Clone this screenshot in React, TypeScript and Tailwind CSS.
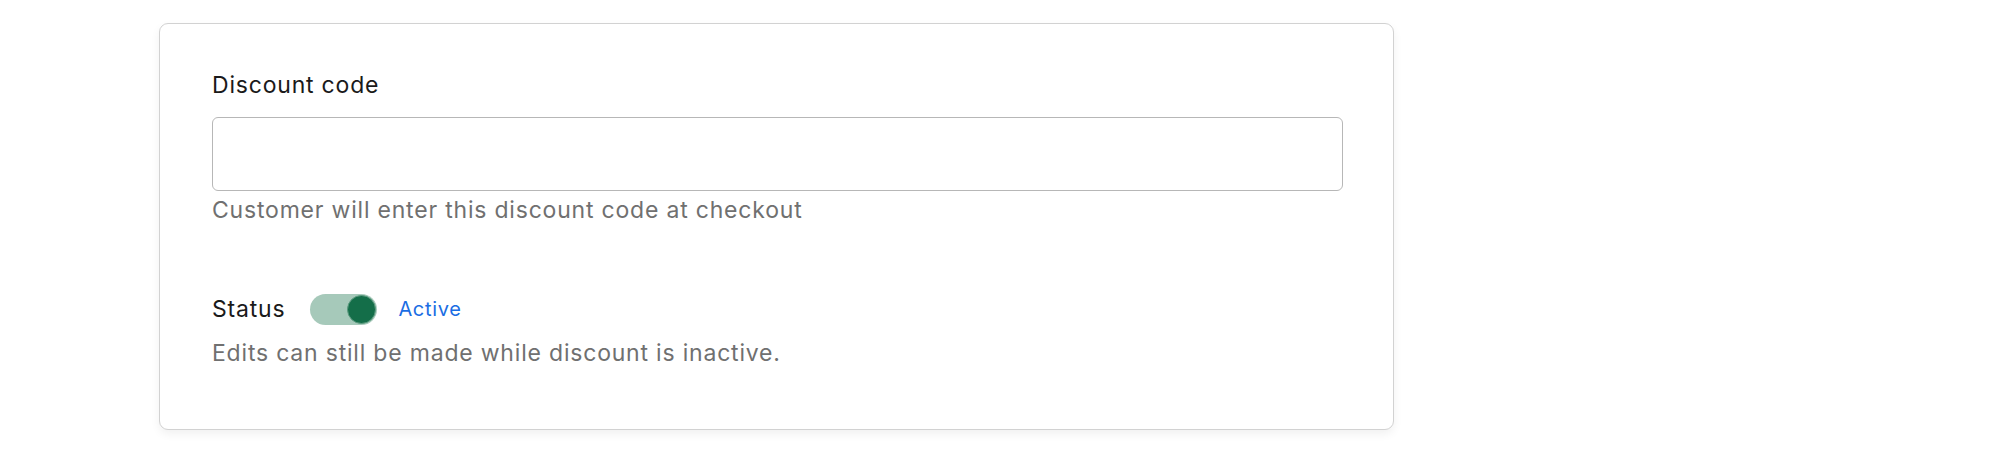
import { useState } from "react";

export default function App(): JSX.Element {
  const [code, setCode] = useState("");
  const [active, setActive] = useState(true);

  return (
    <div className="min-h-[449px] w-[2000px] bg-white font-['Inter',_'Liberation_Sans',_sans-serif]">
      <div className="pl-[159px] pt-[23px]">
        <section className="w-[1235px] rounded-[9px] border border-[#d2d2d2] bg-white pb-[60px] pl-[52px] pr-[50px] pt-[45px] shadow-[0_4px_10px_rgba(0,0,0,0.06)]">
          <label
            htmlFor="discount-code"
            className="block text-[23px] leading-[32px] tracking-[0.8px] text-[#1a1a1a]"
          >
            Discount code
          </label>
          <input
            id="discount-code"
            value={code}
            onChange={(e) => setCode(e.target.value)}
            className="mt-[16px] block h-[74px] w-full rounded-[6px] border border-[#b7b7b7] bg-white px-4 text-[23px] outline-none"
          />
          <p className="mt-[3px] text-[23px] leading-[32px] tracking-[0.8px] text-[#707070]">
            Customer will enter this discount code at checkout
          </p>

          <div className="mt-[67px] flex h-[32px] items-center">
            <span className="text-[23px] leading-[32px] tracking-[0.8px] text-[#1a1a1a]">Status</span>
            <button
              type="button"
              onClick={() => setActive(!active)}
              className={
                active
                  ? "ml-[25px] flex h-[31px] w-[67px] items-center justify-end rounded-full bg-[#a6c9ba] px-[1px]"
                  : "ml-[25px] flex h-[31px] w-[67px] items-center justify-start rounded-full bg-[#d4d4d4] px-[1px]"
              }
            >
              <span className="block h-[29px] w-[29px] rounded-full border border-[#5d9b80] bg-[#146e49]" />
            </button>
            <span className="ml-[21px] text-[20px] leading-[32px] tracking-[0.7px] text-[#1a6de3]">
              {active ? "Active" : "Inactive"}
            </span>
          </div>
          <p className="mt-[12px] text-[23px] leading-[32px] tracking-[0.8px] text-[#707070]">
            Edits can still be made while discount is inactive.
          </p>
        </section>
      </div>
    </div>
  );
}
